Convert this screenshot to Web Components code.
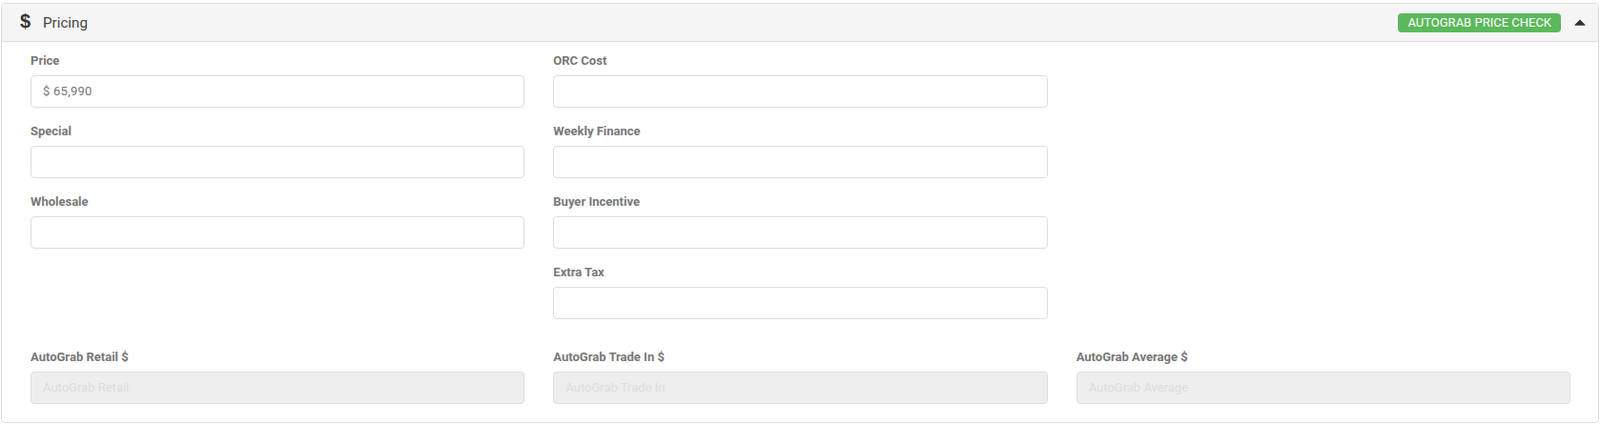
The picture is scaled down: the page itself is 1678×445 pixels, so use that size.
<!DOCTYPE html>
<html>
<head>
<meta charset="utf-8">
<title>Pricing</title>
<style>
html, body { margin: 0; background: #fff; }
body { padding: 3px 1px 0 1px; font-family: Roboto, "Liberation Sans", sans-serif; }
</style>
</head>
<body>
<pricing-panel heading="Pricing">
	<form-field label="Price" value="$ 65,990"></form-field>
	<form-field label="ORC Cost"></form-field>
	<span></span>
	<form-field label="Special"></form-field>
	<form-field label="Weekly Finance"></form-field>
	<span></span>
	<form-field label="Wholesale"></form-field>
	<form-field label="Buyer Incentive"></form-field>
	<span></span>
	<span></span>
	<form-field label="Extra Tax"></form-field>
	<span></span>
	<form-field class="auto" label="AutoGrab Retail $" placeholder="AutoGrab Retail" disabled></form-field>
	<form-field class="auto" label="AutoGrab Trade In $" placeholder="AutoGrab Trade In" disabled></form-field>
	<form-field class="auto" label="AutoGrab Average $" placeholder="AutoGrab Average" disabled></form-field>
</pricing-panel>

<template id="panel-tpl">
	<style>
	:host{
		display: block;
		height: 441px;
		box-sizing: border-box;
		border: 1px solid #ddd;
		border-radius: 4px;
		background-color: #fff;
		overflow: hidden;
	}
	header{
		display: flex;
		align-items: center;
		height: 39px;
		box-sizing: content-box;
		padding: 0 13px 0 19px;
		background-color: #f5f5f5;
		border-bottom: 1px solid #ddd;
	}
	.icon{
		width: 24px;
		font: 700 20px "Liberation Sans", sans-serif;
		color: #333;
		margin-top: -3px;
	}
	h2{
		flex: 1;
		margin: 0;
		font: 400 15.2px Roboto, sans-serif;
		color: #444;
	}
	button{
		height: 20px;
		padding: 0 10px;
		margin-right: 14px;
		border: 0;
		border-radius: 4px;
		background-color: #5cb85c;
		color: #fff;
		font: 400 13px Roboto, sans-serif;
	}
	svg{
		width: 12px;
		height: 7px;
	}
	.fields{
		display: grid;
		grid-template-columns: repeat(3, 1fr);
		column-gap: 30px;
		padding: 0 29px 0 30px;
	}
	</style>
	<header>
		<span class="icon">$</span>
		<h2 id="heading"></h2>
		<button type="button">AUTOGRAB PRICE CHECK</button>
		<svg viewBox="0 0 12 7"><path d="M6 .5 11.5 6a.5.5 0 0 1-.4.8H.9A.5.5 0 0 1 .5 6z" fill="#333"/></svg>
	</header>
	<div class="fields"><slot></slot></div>
</template>

<template id="field-tpl">
	<style>
	:host{
		display: block;
		height: 74px;
		box-sizing: border-box;
		padding-top: 11px;
	}
	:host(.auto){
		margin-top: 15px;
	}
	label{
		display: block;
		height: 24px;
		font: 700 13px/18px Roboto, sans-serif;
		color: #777;
	}
	input{
		display: block;
		width: 100%;
		height: 34px;
		box-sizing: border-box;
		padding: 5px 12px 7px;
		border: 1px solid #ddd;
		border-radius: 4px;
		background-color: #fff;
		font: 400 13px Roboto, sans-serif;
		letter-spacing: .25px;
		color: #777;
		outline: none;
	}
	input::placeholder{
		color: #ddd;
		letter-spacing: 0;
		opacity: 1;
	}
	input:disabled{
		background-color: #eee;
		border-color: #ddd;
	}
	</style>
	<label id="label"></label>
	<input id="input" type="text">
</template>

<script>
class PricingPanel extends HTMLElement {
	constructor(){
		super();
		this.attachShadow({ mode: 'open' });
		this.shadowRoot.appendChild(document.getElementById('panel-tpl').content.cloneNode(true));
		this.shadowRoot.getElementById('heading').textContent = this.getAttribute('heading');
	}
}

class FormField extends HTMLElement {
	constructor(){
		super();
		this.attachShadow({ mode: 'open' });
		this.shadowRoot.appendChild(document.getElementById('field-tpl').content.cloneNode(true));
		const input = this.shadowRoot.getElementById('input');
		this.shadowRoot.getElementById('label').textContent = this.getAttribute('label');
		input.value = this.getAttribute('value') || '';
		input.placeholder = this.getAttribute('placeholder') || '';
		input.disabled = this.hasAttribute('disabled');
	}
}

customElements.define('pricing-panel', PricingPanel);
customElements.define('form-field', FormField);
</script>
</body>
</html>
